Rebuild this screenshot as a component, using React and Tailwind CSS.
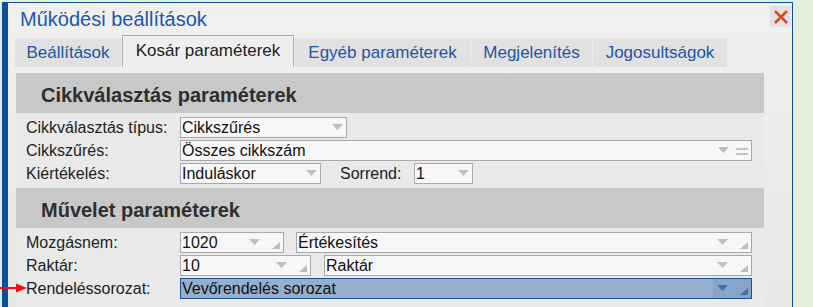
import React from 'react';

const tabs = [
    { label: 'Beállítások', w: 'w-[106px]' },
    { label: 'Kosár paraméterek', w: 'w-[172px]', active: true },
    { label: 'Egyéb paraméterek', w: 'w-[175px]' },
    { label: 'Megjelenítés', w: 'w-[121px]' },
    { label: 'Jogosultságok', w: 'w-[134px]' },
];

const Arrow = ({ color = '#bfbfbf' }) => (
    <svg width="11" height="6" className="mt-[6px] shrink-0">
        <path d="M0 0H11L5.5 6Z" fill={color} />
    </svg>
);

const Corner = ({ color = '#bdbdbd' }) => (
    <svg width="8" height="7" className="mt-[9px] shrink-0">
        <path d="M8 0V7H0Z" fill={color} />
    </svg>
);

const Lines = () => (
    <svg width="12" height="7" className="mt-[7px] shrink-0">
        <rect x="0" y="0" width="12" height="2" fill="#c4c4c4" />
        <rect x="0" y="5" width="12" height="2" fill="#c4c4c4" />
    </svg>
);

// combo-like input box
const Box = ({ w, value, kind = 'arrow' }) => (
    <div className={`${w} h-[21px] flex items-start border border-[#a9a9a9] bg-[#f7f7f7]`}>
        <span className="flex-1 pl-[1px] leading-[19px] text-[#111] whitespace-nowrap overflow-hidden">{value}</span>
        {kind === 'arrow' && (
            <div className="flex mr-[3px]"><Arrow /></div>
        )}
        {kind === 'lines' && (
            <div className="flex gap-[7px] mr-[3px]"><Arrow /><Lines /></div>
        )}
        {kind === 'corner' && (
            <div className="flex gap-[12px] mr-[3px]"><Arrow /><Corner /></div>
        )}
    </div>
);

const Header = ({ title }) => (
    <div className="h-[40px] bg-[#c8c8c8] pl-[25px] pt-[10px]">
        <div className="text-[20px] leading-[24px] font-bold text-[#2e2e2e]">{title}</div>
    </div>
);

const Row = ({ label, children }) => (
    <div className="flex items-start h-[21px]">
        <div className="w-[164px] shrink-0 pl-[10px] leading-[21px] text-[#222] whitespace-nowrap">{label}</div>
        {children}
    </div>
);

const Tab = ({ label, w, active }) => {
    if (active) {
        return (
            <div className={`${w} h-[32px] flex justify-center border border-b-0 border-[#acacac] bg-[#efefef] pt-[5px]`}>
                <span className="text-[17px] leading-[20px] text-[#222] whitespace-nowrap">{label}</span>
            </div>
        );
    }
    return (
        <div className={`${w} h-[29px] flex justify-center bg-[#e1e1e1] pt-[5px]`}>
            <span className="text-[17px] leading-[20px] text-[#1c56a2] whitespace-nowrap">{label}</span>
        </div>
    );
};

export default function App() {
    return (
        <div
            className="relative w-[813px] h-[307px] overflow-hidden bg-[#e3eedc] text-[16px]"
            style={{ fontFamily: '"Liberation Sans", Arial, sans-serif' }}
        >
            <div className="ml-[2px] mt-[2px] w-[791px] h-[330px] border-l-[6px] border-t border-r border-[#0b4f9e] bg-linear-to-b from-[#f0f0f0] to-[#e6e6e6]">
                {/* title row */}
                <div className="flex items-start justify-between">
                    <div className="mt-[4px] pl-[12px] text-[20px] leading-[24px] text-[#1c58a5]">Működési beállítások</div>
                    <div className="mt-[3px] mr-[1px] w-[21px] h-[21px] bg-[#e2e2e2] flex items-center justify-center">
                        <svg width="14" height="14" viewBox="0 0 14 14">
                            <path d="M1 1L13 13M13 1L1 13" stroke="#d8492c" strokeWidth="2.6" />
                        </svg>
                    </div>
                </div>

                {/* tabs */}
                <div className="flex items-end gap-[1px] mt-[4px] pl-[7px] h-[32px]">
                    {tabs.map((t) => (
                        <Tab key={t.label} {...t} />
                    ))}
                </div>

                {/* content */}
                <div className="ml-[8px] mt-[6px] w-[748px] bg-[#e9e9e9]">
                    <Header title="Cikkválasztás paraméterek" />
                    <div className="flex flex-col gap-[2px] pt-[4px] pb-[4px]">
                        <Row label="Cikkválasztás típus:">
                            <Box w="w-[167px]" value="Cikkszűrés" />
                        </Row>
                        <Row label="Cikkszűrés:">
                            <Box w="w-[572px]" value="Összes cikkszám" kind="lines" />
                        </Row>
                        <Row label="Kiértékelés:">
                            <Box w="w-[141px]" value="Induláskor" />
                            <div className="ml-[19px] w-[74px] leading-[21px] text-[#222]">Sorrend:</div>
                            <Box w="w-[59px]" value="1" />
                        </Row>
                    </div>

                    <Header title="Művelet paraméterek" />
                    <div className="flex flex-col gap-[2px] pt-[4px] pb-[10px]">
                        <Row label="Mozgásnem:">
                            <Box w="w-[104px]" value="1020" kind="corner" />
                            <div className="ml-[12px]"><Box w="w-[456px]" value="Értékesítés" kind="corner" /></div>
                        </Row>
                        <Row label="Raktár:">
                            <Box w="w-[131px]" value="10" kind="corner" />
                            <div className="ml-[13px]"><Box w="w-[428px]" value="Raktár" kind="corner" /></div>
                        </Row>
                        <Row label="Rendeléssorozat:">
                            <div className="w-[572px] h-[21px] flex items-stretch border border-[#1d4f92] bg-[#95afcc]">
                                <span className="flex-1 pl-[1px] leading-[19px] text-[#111]">Vevőrendelés sorozat</span>
                                <div className="w-[38px] flex gap-[12px] pl-[4px] bg-[#86a5c8]">
                                    <Arrow color="#3c72b6" />
                                    <Corner color="#3c72b6" />
                                </div>
                            </div>
                        </Row>
                    </div>
                </div>
            </div>

            {/* red pointer arrow */}
            <svg className="absolute left-0 top-[282px]" width="28" height="12" viewBox="0 0 28 12">
                <path d="M0 6H18" stroke="#e11" strokeWidth="2" />
                <path d="M16 1.5L27 6L16 10.5Z" fill="#e11" />
            </svg>
        </div>
    );
}
